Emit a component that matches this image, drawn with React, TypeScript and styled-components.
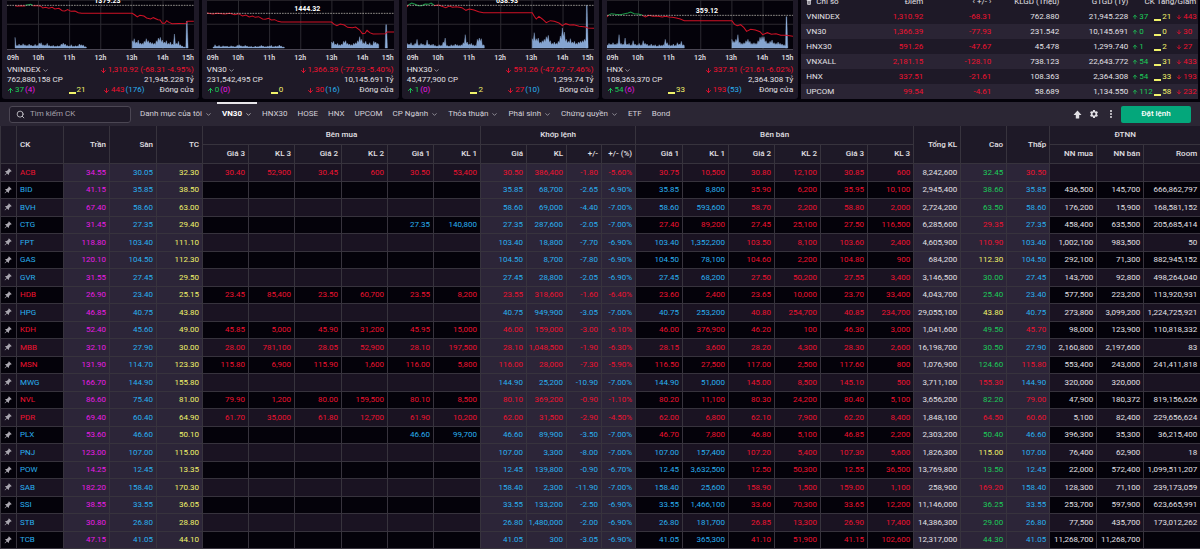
import React from "react";
import styled, { createGlobalStyle, css } from "styled-components";
import { ArrowDown, ArrowUp, ChevronDown, MoreVertical, Search } from "lucide-react";
import { MdSettings } from "react-icons/md";
import { BsPinAngleFill, BsTrashFill } from "react-icons/bs";

/* ---------- theme ---------- */

const c = {
  page: "#04020a",
  card: "#1e1927",
  raised: "#2a2434",
  nav: "#2b2634",
  odd: "#1a1322",
  even: "#04020a",
  line: "#37333d",
  text: "#e2e0e5",
  up: "#1ccb58",
  down: "#ee1230",
  ref: "#f0f26a",
  ceil: "#e91be4",
  floor: "#29b0ef",
  action: "#04a77b",
};

const Global = createGlobalStyle`
  * { box-sizing: border-box; }
  body {
    margin: 0;
    background: ${c.page};
    color: ${c.text};
    font-family: Roboto, "Liberation Sans", sans-serif;
    font-size: 8px;
    line-height: 10px;
    overflow: hidden;
  }
  button, input { font: inherit; color: inherit; }
  svg { display: block; flex: none; }
`;

/* ---------- top strip ---------- */

const TopStrip = styled.section`
  display: grid;
  grid-template-columns: repeat(4, 197fr) 397fr;
  grid-template-rows: 99px;
  align-items: end;
  gap: 3px;
  height: 100px;
  padding: 0 2px;
  overflow: hidden;
`;

const Card = styled.article`
  background: ${c.card};
  border-radius: 3px;
  min-width: 0;
`;

const ChartCard = styled(Card)`
  padding: 6px 5px 4px;
`;

const Plot = styled.div`
  position: relative;
  background: ${c.page};
  border-bottom: 1px solid #4a4653;
`;

const PlotSvg = styled.svg`
  width: 100%;
  height: 60px;
`;

const RefLabel = styled.span<{ $top: number }>`
  position: absolute;
  left: 0;
  right: 14px;
  top: ${(p) => p.$top}px;
  padding-left: 28px;
  text-align: center;
  font-size: 7px;
  line-height: 8px;
  font-weight: 700;
  color: #fff;
`;

const Hours = styled.div`
  display: flex;
  padding: 3px 0 2px;
  font-size: 7px;
  font-weight: 500;
`;

const Hour = styled.span`
  flex: 2 1 0;
  text-align: center;
  &:first-child { flex-grow: 1; text-align: left; }
  &:last-child { flex-grow: 1; text-align: right; }
`;

const InfoRow = styled.div`
  display: flex;
  justify-content: space-between;
  white-space: nowrap;
`;

const PlainButton = styled.button`
  display: inline-flex;
  align-items: center;
  gap: 1px;
  padding: 0;
  border: 0;
  background: none;
  cursor: pointer;
`;

const Counts = styled.div`
  display: grid;
  grid-template-columns: repeat(4, 1fr);
  white-space: nowrap;
`;

type Align = "flex-start" | "center" | "flex-end";

const Count = styled.span<{ $color?: string; $align?: Align }>`
  display: flex;
  align-items: center;
  justify-content: ${(p) => p.$align ?? "flex-start"};
  gap: 1px;
  color: ${(p) => p.$color ?? c.text};
`;

const Tint = styled.span<{ $color: string }>`
  color: ${(p) => p.$color};
`;

const Dash = styled.i`
  width: 7px;
  height: 2px;
  align-self: flex-end;
  margin-bottom: 1px;
  background: currentColor;
`;

interface Volume {
  x: number;
  step: number;
  h: number[];
}

interface Chart {
  name: string;
  origin: number;
  reference: string;
  refY: number;
  gain: string;
  loss: string;
  volumes: Volume[];
  spike: [number, number];
  last: string;
  shares: string;
  value: string;
  counts: [number, number, number, number, number];
}

const charts: Chart[] = [
  {
    name: "VNINDEX", origin: 23, reference: "1379.23", refY: 19,
    gain: "M78 19L86 17L94 16L100 19",
    loss: "M47 20L54 22L62 20L78 21M100 20L116 20L125 22L130 27L138 25L148 28L158 25L166 30L178 28L188 35L196 36L204 32L214 37L226 36L236 41L246 43L397 43L405 48L412 54L420 49L432 51L440 57L452 60L460 56L474 62L480 63L487 73L494 73L500 65L507 70L516 74L558 73L562 67L581 67",
    volumes: [
      { x: 47, step: 6, h: [32, 8, 12, 9, 13, 10, 8, 12, 9, 7, 11, 8, 15, 16, 10, 9, 14, 8, 6, 8, 5, 7, 6, 12, 15, 12, 8, 6, 10, 5, 7, 6, 12, 10, 9, 4] },
      { x: 397, step: 6, h: [22, 28, 18, 24, 15, 14, 20, 28, 22, 18, 16, 14, 22, 30, 32, 24, 18, 22, 14, 18, 12, 42, 14, 20, 10, 6, 3] },
    ],
    spike: [560, 80],
    last: "1,310.92 (-68.31 -4.95%)", shares: "762,880,158 CP", value: "21,945.228 Tỷ", counts: [37, 4, 21, 443, 176],
  },
  {
    name: "VN30", origin: 622, reference: "1444.32", refY: 43,
    gain: "",
    loss: "M622 42L640 45L652 43L676 45L690 43L705 47L716 44L728 51L738 48L748 54L758 51L766 55L776 53L788 60L796 61L806 58L814 63L824 62L834 67L844 69L994 69L1002 76L1010 80L1020 75L1032 78L1042 85L1056 86L1066 84L1078 93L1086 104L1094 103L1100 94L1108 101L1118 105L1155 104L1160 99L1181 99",
    volumes: [
      { x: 640, step: 6, h: [3, 10, 5, 8, 4, 7, 5, 6, 4, 7, 5, 4, 8, 10, 7, 5, 8, 6, 4, 5, 3, 6, 4, 5, 8, 6, 4, 5, 6, 8, 4, 6, 5, 9, 6, 3] },
      { x: 994, step: 6, h: [18, 20, 12, 14, 10, 12, 20, 22, 14, 12, 10, 14, 16, 22, 34, 26, 16, 20, 12, 16, 10, 20, 18, 14] },
    ],
    spike: [1157, 70],
    last: "1,366.39 (-77.93 -5.40%)", shares: "231,542,495 CP", value: "10,145.691 Tỷ", counts: [0, 0, 0, 30, 16],
  },
  {
    name: "HNX30", origin: 22, reference: "638.93", refY: 19,
    gain: "M26 18L36 12L46 16L56 20L66 20L76 15L86 16L94 12L102 18",
    loss: "M22 24L26 18M102 20L116 18L126 22L138 26L148 21L158 25L170 23L186 26L198 34L208 30L222 33L236 38L250 41L396 41L402 52L408 60L416 52L426 60L438 71L450 65L462 67L476 72L486 80L496 74L508 78L520 77L536 82L556 84L562 87L581 88",
    volumes: [
      { x: 22, step: 6, h: [14, 12, 16, 10, 14, 26, 10, 14, 12, 10, 24, 12, 10, 12, 8, 6, 10, 8, 18, 30, 8, 6, 10, 8, 12, 10, 8, 10, 16, 40, 18, 12, 14, 10, 8, 26, 30, 28, 10] },
      { x: 396, step: 6, h: [28, 46, 28, 30, 18, 22, 26, 34, 38, 22, 14, 18, 14, 20, 36, 60, 48, 26, 20, 28, 18, 20, 14, 18, 20, 22, 26, 30] },
    ],
    spike: [559, 128],
    last: "591.26 (-47.67 -7.46%)", shares: "45,477,900 CP", value: "1,299.74 Tỷ", counts: [1, 0, 2, 27, 10],
  },
  {
    name: "HNX", origin: 621, reference: "359.12", refY: 49,
    gain: "M626 48L634 44L646 46L660 47L674 44L684 42L692 39L702 44L714 45L726 48",
    loss: "M621 54L626 48M726 49L736 54L746 49L758 52L770 51L786 54L796 52L806 54L816 55L828 57L840 60L852 65L994 65L1002 76L1010 80L1020 77L1030 86L1038 97L1050 91L1064 93L1078 98L1086 107L1100 101L1112 106L1126 104L1140 109L1156 109L1178 112",
    volumes: [
      { x: 621, step: 6, h: [10, 14, 12, 16, 12, 14, 40, 14, 12, 30, 12, 14, 10, 22, 12, 10, 14, 10, 22, 14, 12, 8, 12, 8, 10, 6, 10, 8, 10, 26, 16, 10, 8, 12, 8, 16, 12, 20, 10] },
      { x: 994, step: 6, h: [26, 20, 26, 40, 18, 14, 16, 22, 26, 20, 14, 16, 14, 22, 32, 34, 34, 22, 16, 20, 24, 16, 14, 18, 14, 12, 10, 8] },
    ],
    spike: [1157, 94],
    last: "337.51 (-21.61 -6.02%)", shares: "108,363,370 CP", value: "2,364.308 Tỷ", counts: [54, 6, 33, 193, 53],
  },
];

const BASE = 147;

const volumePath = ({ x, step, h }: Volume) => {
  const tops = h.map((v, i) => {
    const px = x + i * step;
    const next = h[i + 1] ?? v;
    return `L${px} ${BASE - v}L${px + step / 2} ${BASE - Math.min(v, next) * 0.7}`;
  });
  return `M${x} ${BASE}${tops.join("")}L${x + h.length * step - step / 2} ${BASE}Z`;
};

const hours = ["09h", "10h", "11h", "12h", "13h", "14h", "15h"];

const IndexChart = ({ chart }: { chart: Chart }) => {
  const [sx, sh] = chart.spike;
  const [up, ceil, flat, down, floor] = chart.counts;
  return (
    <ChartCard>
      <Plot>
        <PlotSvg viewBox="0 -30 558 180" preserveAspectRatio="none" aria-hidden>
          <g fill="none" stroke="#2c2a31" strokeWidth="3">
            <path d="M94 -30V150M187 -30V150M280 -30V150M373 -30V150M466 -30V150M0 4H558M0 76H558" />
          </g>
          <g transform={`translate(${-chart.origin} 0)`}>
            {chart.volumes.map((v) => (
              <path key={v.x} d={volumePath(v)} fill="#85a4d0" stroke="#9ab8e0" strokeWidth="1" />
            ))}
            <path d={`M${sx - 3} ${BASE}L${sx - 1} ${BASE - sh}H${sx + 1}L${sx + 4} ${BASE}Z`} fill="#8fafdb" stroke="#8fafdb" />
            <path d={chart.loss} fill="none" stroke="#cf1226" strokeWidth="3" />
            <path d={chart.gain} fill="none" stroke="#1a9a48" strokeWidth="3" />
          </g>
          <path d={`M0 ${chart.refY}H558`} stroke="#d5d2c8" strokeWidth="2" strokeDasharray="5 3" />
        </PlotSvg>
        <RefLabel $top={Math.round((chart.refY + 30) / 3) - 8}>{chart.reference}</RefLabel>
      </Plot>
      <Hours>
        {hours.map((h) => (
          <Hour key={h}>{h}</Hour>
        ))}
      </Hours>
      <InfoRow>
        <PlainButton type="button">
          {chart.name} <ChevronDown size={7} />
        </PlainButton>
        <Count $color={c.down}>
          <ArrowDown size={7} strokeWidth={3} />
          {chart.last}
        </Count>
      </InfoRow>
      <InfoRow>
        <span>{chart.shares}</span>
        <span>{chart.value}</span>
      </InfoRow>
      <Counts>
        <Count $color={c.up}>
          <ArrowUp size={7} strokeWidth={3} />
          {up}
          <Tint $color={c.ceil}>({ceil})</Tint>
        </Count>
        <Count $color={c.ref} $align="center">
          <Dash />
          {flat}
        </Count>
        <Count $color={c.down} $align="center">
          <ArrowDown size={7} strokeWidth={3} />
          {down}
          <Tint $color={c.floor}>({floor})</Tint>
        </Count>
        <Count $align="flex-end">Đóng cửa</Count>
      </Counts>
    </ChartCard>
  );
};

/* ---------- index summary ---------- */

const SummaryTable = styled.table`
  width: 100%;
  table-layout: fixed;
  border-collapse: collapse;
  white-space: nowrap;
`;

const SummaryRow = styled.tr`
  height: 15px;
  tbody &:nth-child(even) { background: ${c.raised}; }
`;

const summaryCell = css`
  padding: 0;
  text-align: right;
  font-weight: 400;
  &:first-child { padding-left: 5px; text-align: left; }
  &:last-child { padding-right: 2px; }
`;

const SummaryHead = styled.th`${summaryCell}`;
const SummaryCell = styled.td<{ $color?: string }>`
  ${summaryCell}
  color: ${(p) => p.$color ?? c.text};
`;

const HeadLabel = styled.span`
  display: flex;
  align-items: center;
  gap: 4px;
`;

const Breadth = styled.div`
  display: grid;
  grid-template-columns: 22px 22px 20px;
  justify-content: end;
`;

const summary: [string, string, string, string, string, number, number, number][] = [
  ["VNINDEX", "1,310.92", "-68.31", "762.880", "21,945.228", 37, 21, 443],
  ["VN30", "1,366.39", "-77.93", "231.542", "10,145.691", 0, 0, 30],
  ["HNX30", "591.26", "-47.67", "45.478", "1,299.740", 1, 2, 27],
  ["VNXALL", "2,181.15", "-128.10", "738.123", "22,643.772", 54, 31, 433],
  ["HNX", "337.51", "-21.61", "108.363", "2,364.308", 54, 33, 193],
  ["UPCOM", "99.54", "-4.61", "58.689", "1,134.550", 112, 58, 232],
];

const Summary = () => (
  <Card>
    <SummaryTable>
      <colgroup>
        <col width={64} />
        <col width={58} />
        <col width={68} />
        <col width={68} />
        <col width={69} />
        <col width={70} />
      </colgroup>
      <thead>
        <SummaryRow>
          <SummaryHead>
            <HeadLabel><BsTrashFill size={6} /> Chỉ số</HeadLabel>
          </SummaryHead>
          <SummaryHead>Điểm</SummaryHead>
          <SummaryHead>‹ +/- ›</SummaryHead>
          <SummaryHead>KLGD (Triệu)</SummaryHead>
          <SummaryHead>GTGD (Tỷ)</SummaryHead>
          <SummaryHead>CK Tăng/Giảm</SummaryHead>
        </SummaryRow>
      </thead>
      <tbody>
        {summary.map(([name, point, change, vol, val, up, flat, down]) => (
          <SummaryRow key={name}>
            <SummaryCell>{name}</SummaryCell>
            <SummaryCell $color={c.down}>{point}</SummaryCell>
            <SummaryCell $color={c.down}>{change}</SummaryCell>
            <SummaryCell>{vol}</SummaryCell>
            <SummaryCell>{val}</SummaryCell>
            <SummaryCell>
              <Breadth>
                <Count $color={c.up}><ArrowUp size={6} strokeWidth={3} />{up}</Count>
                <Count $color={c.ref}><Dash />{flat}</Count>
                <Count $color={c.down}><ArrowDown size={6} strokeWidth={3} />{down}</Count>
              </Breadth>
            </SummaryCell>
          </SummaryRow>
        ))}
      </tbody>
    </SummaryTable>
  </Card>
);

/* ---------- navigation ---------- */

const NavBar = styled.nav`
  display: flex;
  align-items: center;
  height: 24px;
  margin-top: 2px;
  padding: 0 9px;
  background: ${c.nav};
  white-space: nowrap;
`;

const SearchBox = styled.label`
  display: flex;
  align-items: center;
  gap: 5px;
  width: 122px;
  height: 17px;
  padding: 0 6px;
  border: 1px solid #4b4653;
  border-radius: 3px;
  background: #1f1a28;
`;

const SearchInput = styled.input`
  flex: 1;
  min-width: 0;
  padding: 0;
  border: 0;
  outline: 0;
  background: none;
  &::placeholder { color: #a5a1ab; opacity: 1; }
`;

const Tabs = styled.div`
  display: flex;
  flex: 1;
  align-self: stretch;
  margin-left: 4px;
`;

const Tab = styled.a<{ $active?: boolean }>`
  display: flex;
  align-items: center;
  gap: 3px;
  padding: 0 5px;
  color: ${(p) => (p.$active ? "#fff" : "#d3d0d8")};
  font-weight: ${(p) => (p.$active ? 700 : 400)};
  text-decoration: none;
  box-shadow: ${(p) => (p.$active ? "inset 0 2px 0 #e8e6ea" : "none")};
`;

const Tools = styled.div`
  display: flex;
  align-items: center;
  gap: 7px;
`;

const OrderButton = styled.button`
  width: 70px;
  height: 17px;
  margin-left: -2px;
  padding: 0;
  border: 0;
  border-radius: 2px;
  background: ${c.action};
  color: #fff;
  font-weight: 500;
`;

const tabs: { label: string; menu?: boolean }[] = [
  { label: "Danh mục của tôi", menu: true },
  { label: "VN30", menu: true },
  { label: "HNX30" },
  { label: "HOSE" },
  { label: "HNX" },
  { label: "UPCOM" },
  { label: "CP Ngành", menu: true },
  { label: "Thỏa thuận", menu: true },
  { label: "Phái sinh", menu: true },
  { label: "Chứng quyền", menu: true },
  { label: "ETF" },
  { label: "Bond" },
];

const Navigation = () => (
  <NavBar>
    <SearchBox>
      <Search size={9} />
      <SearchInput placeholder="Tìm kiếm CK" aria-label="Tìm kiếm CK" />
    </SearchBox>
    <Tabs>
      {tabs.map(({ label, menu }) => (
        <Tab key={label} href={`#${label}`} $active={label === "VN30"}>
          {label}
          {menu && <ChevronDown size={7} />}
        </Tab>
      ))}
    </Tabs>
    <Tools>
      <PlainButton type="button" aria-label="Lên đầu trang">
        <svg width="9" height="9" viewBox="0 0 9 9" fill="currentColor">
          <path d="M4.500 .5L8.500 5H6.200V8.500H2.800V5H.5Z" />
        </svg>
      </PlainButton>
      <PlainButton type="button" aria-label="Cài đặt">
        <MdSettings size={10} />
      </PlainButton>
      <PlainButton type="button" aria-label="Thêm">
        <MoreVertical size={10} strokeWidth={3} />
      </PlainButton>
      <OrderButton type="button">Đặt lệnh</OrderButton>
    </Tools>
  </NavBar>
);

/* ---------- price board ---------- */

const Board = styled.table`
  width: 100%;
  table-layout: fixed;
  border-collapse: separate;
  border-spacing: 0;
  border-right: 1px solid ${c.line};
  white-space: nowrap;
`;

const Head = styled.th<{ $center?: boolean; $left?: boolean }>`
  height: 19px;
  padding: 0 3px;
  border-left: 1px solid ${c.line};
  border-bottom: 1px solid ${c.line};
  background: ${c.card};
  font-weight: 500;
  text-align: ${(p) => (p.$center ? "center" : p.$left ? "left" : "right")};
`;

const Row = styled.tr`
  height: 18px;
  background: ${c.odd};
  &:nth-child(even) { height: 17px; background: ${c.even}; }
`;

const Cell = styled.td<{ $color?: string; $tinted?: boolean; $left?: boolean }>`
  padding: 0 3px 0 ${(p) => (p.$left ? 3 : 0)}px;
  border-left: 1px solid ${c.line};
  border-bottom: 1px solid ${c.line};
  text-align: ${(p) => (p.$left ? "left" : "right")};
  color: ${(p) => p.$color ?? c.text};
  ${(p) => p.$tinted && css`background: #2c2538;`}
`;

const PinButton = styled(PlainButton)`
  color: #aaa7b0;
  vertical-align: middle;
`;

const widths = [16, 47, 46, 47, 46, 46, 46, 47, 46, 46, 47, 46, 40, 35, 34, 47, 46, 46, 46, 47, 46, 47, 46, 43, 47, 47, 57];

const subHeads = [
  "Giá 3", "KL 3", "Giá 2", "KL 2", "Giá 1", "KL 1",
  "Giá", "KL", "+/-", "+/- (%)",
  "Giá 1", "KL 1", "Giá 2", "KL 2", "Giá 3", "KL 3",
  "NN mua", "NN bán", "Room",
];

/* code | ceiling floor reference | bids | match | asks | total high low | foreign */
const quotes = `
ACB|34.55 30.05 32.30|30.40 52,900 30.45 600 30.50 53,400|30.50 386,400 -1.80 -5.60%|30.75 10,500 30.80 12,100 30.85 600|8,242,600 32.45 30.50|
BID|41.15 35.85 38.50||35.85 68,700 -2.65 -6.90%|35.85 8,800 35.90 6,200 35.95 10,100|2,945,400 38.60 35.85|436,500 145,700 666,862,797
BVH|67.40 58.60 63.00||58.60 69,000 -4.40 -7.00%|58.60 593,600 58.70 2,200 58.80 2,000|2,724,200 63.50 58.60|176,200 15,900 168,581,152
CTG|31.45 27.35 29.40|27.35 140,800|27.35 287,600 -2.05 -7.00%|27.40 89,200 27.45 25,100 27.50 116,500|6,285,600 29.35 27.35|458,400 635,500 205,685,414
FPT|118.80 103.40 111.10||103.40 18,800 -7.70 -6.90%|103.40 1,352,200 103.50 8,100 103.60 2,400|4,605,900 110.90 103.40|1,002,100 983,500 50
GAS|120.10 104.50 112.30||104.50 8,700 -7.80 -6.90%|104.50 78,100 104.60 2,200 104.80 900|684,200 112.30 104.50|292,100 71,300 882,945,152
GVR|31.55 27.45 29.50||27.45 28,800 -2.05 -6.90%|27.45 68,200 27.50 50,200 27.55 3,400|3,146,500 30.00 27.45|143,700 92,800 498,264,040
HDB|26.90 23.40 25.15|23.45 85,400 23.50 60,700 23.55 8,200|23.55 318,600 -1.60 -6.40%|23.60 2,400 23.65 10,000 23.70 33,400|4,043,700 25.40 23.40|577,500 223,200 113,920,931
HPG|46.85 40.75 43.80||40.75 949,900 -3.05 -7.00%|40.75 253,200 40.80 254,700 40.85 234,700|29,055,100 43.80 40.75|273,800 3,099,200 1,224,725,921
KDH|52.40 45.60 49.00|45.85 5,000 45.90 31,200 45.95 15,000|46.00 159,000 -3.00 -6.10%|46.00 376,900 46.20 100 46.30 3,000|1,041,600 49.50 45.70|98,000 123,900 110,818,332
MBB|32.10 27.90 30.00|28.00 781,100 28.05 52,900 28.10 197,500|28.10 1,048,500 -1.90 -6.30%|28.15 3,600 28.20 4,300 28.30 2,600|16,198,700 30.50 27.90|2,160,800 2,197,600 83
MSN|131.90 114.70 123.30|115.80 6,900 115.90 1,600 116.00 5,800|116.00 28,000 -7.30 -5.90%|116.50 27,500 117.00 2,500 117.60 800|1,076,900 124.60 115.80|553,400 243,000 241,411,818
MWG|166.70 144.90 155.80||144.90 25,200 -10.90 -7.00%|144.90 51,000 145.00 8,500 145.10 500|3,711,100 155.30 144.90|320,000 320,000
NVL|86.60 75.40 81.00|79.90 1,200 80.00 159,500 80.10 8,500|80.10 369,200 -0.90 -1.10%|80.20 11,100 80.30 24,200 80.40 5,100|3,656,200 82.20 79.00|47,900 180,372 819,156,626
PDR|69.40 60.40 64.90|61.70 35,000 61.80 12,700 61.90 10,200|62.00 31,500 -2.90 -4.50%|62.00 6,800 62.10 7,900 62.20 8,400|1,848,100 64.50 60.60|5,100 82,400 229,656,624
PLX|53.60 46.60 50.10|46.60 99,700|46.60 89,900 -3.50 -7.00%|46.70 7,800 46.80 5,100 46.85 2,200|2,303,200 50.40 46.60|396,300 35,300 36,215,400
PNJ|123.00 107.00 115.00||107.00 3,300 -8.00 -7.00%|107.00 157,400 107.20 5,400 107.30 5,600|1,826,300 115.00 107.00|76,400 62,900 18
POW|14.25 12.45 13.35||12.45 139,800 -0.90 -6.70%|12.45 3,632,500 12.50 50,300 12.55 36,500|13,769,800 13.50 12.45|22,000 572,400 1,099,511,207
SAB|182.20 158.40 170.30||158.40 2,300 -11.90 -7.00%|158.40 25,600 158.90 1,500 159.00 1,100|258,900 169.20 158.40|128,300 71,100 239,173,059
SSI|38.55 33.55 36.05||33.55 133,200 -2.50 -6.90%|33.55 1,466,100 33.60 70,300 33.65 12,200|11,146,000 36.25 33.55|253,700 597,900 623,665,991
STB|30.80 26.80 28.80||26.80 1,480,000 -2.00 -6.90%|26.80 181,700 26.85 13,300 26.90 17,400|14,386,300 29.00 26.80|77,500 435,700 173,012,262
TCB|47.15 41.05 44.10||41.05 300 -3.05 -6.90%|41.05 365,300 41.10 51,900 41.15 102,600|12,317,000 44.30 41.05|11,268,700 11,268,700
`
  .trim()
  .split("\n")
  .map((line) => {
    const [code, ...groups] = line.split("|");
    return { code, groups: groups.map((g) => (g ? g.split(" ") : [])) };
  });

const QuoteRow = ({ code, groups }: (typeof quotes)[number]) => {
  const [limits, bids, match, asks, range, foreign] = groups;
  const [ceil, floor, ref] = limits.map(Number);
  const tone = (price?: string) => {
    const p = Number(price);
    if (p === ref) return c.ref;
    if (p === floor) return c.floor;
    if (p === ceil) return c.ceil;
    return p > ref ? c.up : c.down;
  };
  // Missing bid levels sit on the left: the best price is always in the last pair.
  const paddedBids = [...Array<string>(6 - bids.length).fill(""), ...bids];
  const depth = (levels: string[]) =>
    levels.map((v, i) => (
      <Cell key={i} $color={tone(levels[i - (i % 2)])}>{v}</Cell>
    ));
  return (
    <Row>
      <Cell $left>
        <PinButton type="button" aria-label={`Ghim ${code}`}>
          <BsPinAngleFill size={8} />
        </PinButton>
      </Cell>
      <Cell $left $color={tone(match[0])}>{code}</Cell>
      {limits.map((v, i) => (
        <Cell key={i} $tinted $color={[c.ceil, c.floor, c.ref][i]}>{v}</Cell>
      ))}
      {depth(paddedBids)}
      {match.map((v, i) => (
        <Cell key={i} $tinted $color={tone(match[0])}>{v}</Cell>
      ))}
      {depth(asks)}
      {range.map((v, i) => (
        <Cell key={i} $tinted $color={i ? tone(v) : undefined}>{v}</Cell>
      ))}
      {[0, 1, 2].map((i) => (
        <Cell key={i}>{foreign[i]}</Cell>
      ))}
    </Row>
  );
};

const PriceBoard = () => (
  <Board>
    <colgroup>
      {widths.map((w, i) => (
        <col key={i} width={w} />
      ))}
    </colgroup>
    <thead>
      <tr>
        <Head rowSpan={2} aria-label="Ghim" />
        <Head rowSpan={2} $left>CK</Head>
        <Head rowSpan={2}>Trần</Head>
        <Head rowSpan={2}>Sàn</Head>
        <Head rowSpan={2}>TC</Head>
        <Head colSpan={6} $center>Bên mua</Head>
        <Head colSpan={4} $center>Khớp lệnh</Head>
        <Head colSpan={6} $center>Bên bán</Head>
        <Head rowSpan={2}>Tổng KL</Head>
        <Head rowSpan={2}>Cao</Head>
        <Head rowSpan={2}>Thấp</Head>
        <Head colSpan={3} $center>ĐTNN</Head>
      </tr>
      <tr>
        {subHeads.map((h, i) => (
          <Head key={i}>{h}</Head>
        ))}
      </tr>
    </thead>
    <tbody>
      {quotes.map((q) => (
        <QuoteRow key={q.code} {...q} />
      ))}
    </tbody>
  </Board>
);

export default function App() {
  return (
    <main>
      <Global />
      <TopStrip>
        {charts.map((chart) => (
          <IndexChart key={chart.name} chart={chart} />
        ))}
        <Summary />
      </TopStrip>
      <Navigation />
      <PriceBoard />
    </main>
  );
}
